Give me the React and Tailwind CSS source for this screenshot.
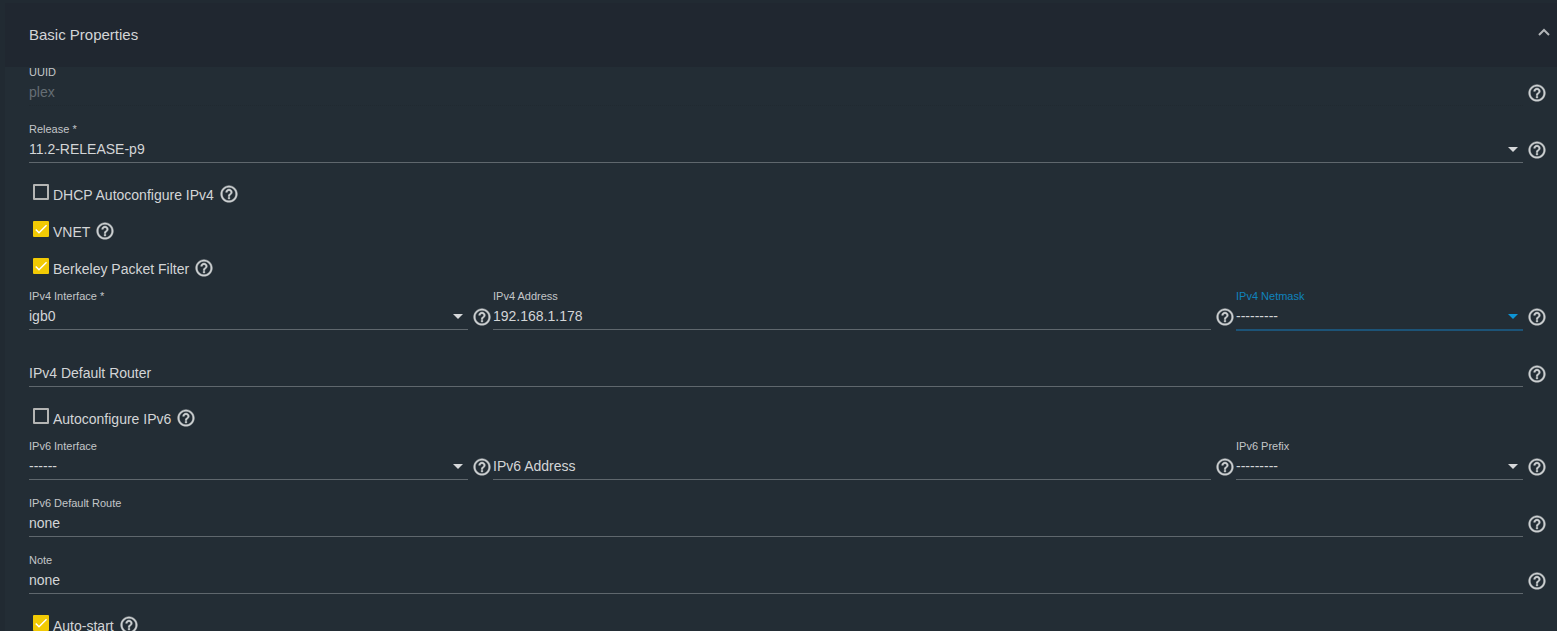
import React, { useState } from 'react';

function HelpButton({ topic, className }) {
    return (
        <button type="button" aria-label={`Help: ${topic}`} className={`shrink-0 h-5 w-5 text-[#cdd0d2] ${className}`}>
            <svg viewBox="0 0 24 24" className="h-5 w-5" fill="currentColor" stroke="currentColor" strokeWidth="0.5">
                <path d="M11 18h2v-2h-2v2zm1-16C6.48 2 2 6.48 2 12s4.48 10 10 10 10-4.48 10-10S17.52 2 12 2zm0 18c-4.41 0-8-3.59-8-8s3.59-8 8-8 8 3.59 8 8-3.59 8-8 8zm0-14c-2.21 0-4 1.79-4 4h2c0-1.1.9-2 2-2s2 .9 2 2c0 2-3 1.75-3 5h2c0-2.25 3-2.5 3-5 0-2.21-1.79-4-4-4z" />
            </svg>
        </button>
    );
}

function Field({ id, label, active, disabled, children }) {
    let line = 'border-b border-[#5f676d]';
    if (active) line = 'border-b-2 border-[#1c5377]';
    if (disabled) line = 'border-b border-dotted border-[#202930]';

    return (
        <div className="flex items-start gap-1 h-[57px]">
            <div className="flex-1 min-w-0 pt-px">
                <label htmlFor={id} className={`block h-4 text-[11px] leading-4 ${active ? 'text-[#0f83bd]' : 'text-[#c3c6c9]'}`}>
                    {label}
                </label>
                <div className={`relative h-[25px] box-content ${line}`}>{children}</div>
            </div>
            <HelpButton topic={label || id} className="mt-5" />
        </div>
    );
}

function TextField({ id, label, floating, disabled, value, onChange }) {
    return (
        <Field id={id} label={floating ? '' : label} disabled={disabled}>
            <input
                id={id}
                type="text"
                aria-label={label}
                placeholder={floating ? label : undefined}
                disabled={disabled}
                value={value}
                onChange={onChange}
                className="block w-full h-6 text-sm leading-6 bg-transparent outline-none placeholder:text-[#d3d5d7] placeholder:opacity-100 disabled:text-[#666e74]"
            />
        </Field>
    );
}

function SelectField({ id, label, active, options, value, onChange }) {
    return (
        <Field id={id} label={label} active={active}>
            <select
                id={id}
                value={value}
                onChange={onChange}
                className="block w-full h-6 text-sm leading-6 bg-transparent appearance-none outline-none"
            >
                {options.map((option) => (
                    <option key={option} className="bg-[#202730]">{option}</option>
                ))}
            </select>
            <svg
                viewBox="0 0 10 5"
                className={`absolute right-[5px] top-[10px] w-[10px] h-[5px] pointer-events-none ${active ? 'text-[#0d95d6]' : 'text-[#d6d8da]'}`}
            >
                <path d="M0 0h10L5 5z" fill="currentColor" />
            </svg>
        </Field>
    );
}

function CheckField({ id, label, checked, onChange }) {
    return (
        <div className="flex items-center h-9 pl-1">
            <span className="relative h-4 w-4 mb-1.5 mr-1">
                <input
                    id={id}
                    type="checkbox"
                    checked={checked}
                    onChange={onChange}
                    className="block h-4 w-4 appearance-none rounded-[1px] border-2 border-[#b4b5b4] checked:border-[#f2ca04] checked:bg-[#f2ca04]"
                />
                {checked && (
                    <svg viewBox="0 0 24 24" className="absolute inset-0 h-4 w-4 pointer-events-none">
                        <path d="M4.1 12.7 9 17.6 20.3 6.3" fill="none" stroke="#fff" strokeWidth="2.2" />
                    </svg>
                )}
            </span>
            <label htmlFor={id} className="text-sm leading-5 mr-[5px]">{label}</label>
            <HelpButton topic={label} className="mb-0.5" />
        </div>
    );
}

export default function App() {
    const [open, setOpen] = useState(true);
    const [jail, setJail] = useState({
        uuid: 'plex',
        release: '11.2-RELEASE-p9',
        dhcp: false,
        vnet: true,
        bpf: true,
        ip4_interface: 'igb0',
        ip4_addr: '192.168.1.178',
        ip4_netmask: '---------',
        defaultrouter: '',
        auto_ip6: false,
        ip6_interface: '------',
        ip6_addr: '',
        ip6_prefix: '---------',
        defaultrouter6: 'none',
        notes: 'none',
        boot: true,
    });

    const bind = (id) => ({
        id,
        value: jail[id],
        onChange: (e) => setJail({ ...jail, [id]: e.target.value }),
    });

    const bindCheck = (id) => ({
        id,
        checked: jail[id],
        onChange: (e) => setJail({ ...jail, [id]: e.target.checked }),
    });

    return (
        <div className="h-screen overflow-hidden bg-[#212a32] pt-[3px] pl-[5px] font-['Liberation_Sans',Arial,sans-serif] text-[#d3d5d7]">
            <section className="min-h-full bg-[#232d35]">
                <header className="relative z-10 bg-[#202730]">
                    <button
                        type="button"
                        aria-expanded={open}
                        onClick={() => setOpen(!open)}
                        className="flex w-full h-16 items-center justify-between pl-6 pr-[7px] text-[15px] leading-5"
                    >
                        Basic Properties
                        <svg viewBox="0 0 12 8" className={`w-3 h-2 mb-1.5 ${open ? '' : 'rotate-180'}`}>
                            <path d="M1 7 6 2l5 5" fill="none" stroke="#b3b6b9" strokeWidth="2" />
                        </svg>
                    </button>
                </header>

                {open && (
                    <form className="-mt-1 pl-6 pr-[10px]">
                        <TextField label="UUID" disabled {...bind('uuid')} />
                        <SelectField label="Release *" options={['11.2-RELEASE-p9']} {...bind('release')} />

                        <div className="flex flex-col gap-px">
                            <CheckField label="DHCP Autoconfigure IPv4" {...bindCheck('dhcp')} />
                            <CheckField label="VNET" {...bindCheck('vnet')} />
                            <CheckField label="Berkeley Packet Filter" {...bindCheck('bpf')} />
                        </div>

                        <div className="grid grid-cols-[463fr_742fr_311fr] gap-px">
                            <SelectField label="IPv4 Interface *" options={['igb0']} {...bind('ip4_interface')} />
                            <TextField label="IPv4 Address" {...bind('ip4_addr')} />
                            <SelectField label="IPv4 Netmask" active options={['---------']} {...bind('ip4_netmask')} />
                        </div>
                        <TextField label="IPv4 Default Router" floating {...bind('defaultrouter')} />

                        <CheckField label="Autoconfigure IPv6" {...bindCheck('auto_ip6')} />

                        <div className="grid grid-cols-[463fr_742fr_311fr] gap-px">
                            <SelectField label="IPv6 Interface" options={['------']} {...bind('ip6_interface')} />
                            <TextField label="IPv6 Address" floating {...bind('ip6_addr')} />
                            <SelectField label="IPv6 Prefix" options={['---------']} {...bind('ip6_prefix')} />
                        </div>
                        <TextField label="IPv6 Default Route" {...bind('defaultrouter6')} />
                        <TextField label="Note" {...bind('notes')} />

                        <CheckField label="Auto-start" {...bindCheck('boot')} />
                    </form>
                )}
            </section>
        </div>
    );
}
